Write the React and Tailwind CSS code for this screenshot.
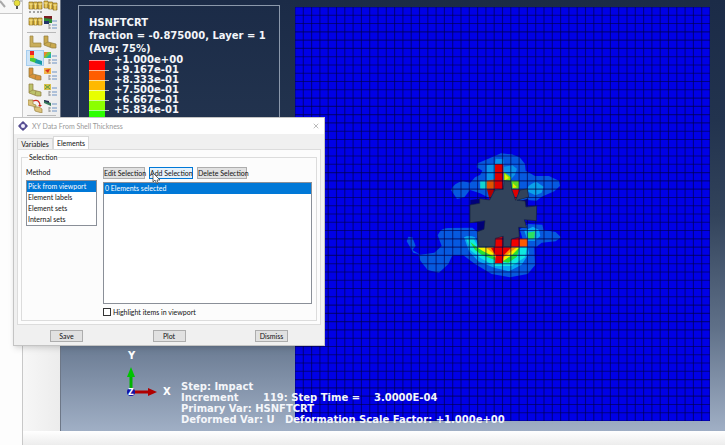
import React, { useState } from 'react';
import { X } from 'lucide-react';

const METHODS = ['Pick from viewport', 'Element labels', 'Element sets', 'Internal sets'];

const LEGEND = [
  ['+1.000e+00', 'bg-[#ff0000]'],
  ['+9.167e-01', 'bg-[#ff5d00]'],
  ['+8.333e-01', 'bg-[#ffb900]'],
  ['+7.500e-01', 'bg-[#e8ff00]'],
  ['+6.667e-01', 'bg-[#8bff00]'],
  ['+5.834e-01', 'bg-[#2eff00]'],
];

const CELLS = 50;
const lines = Array.from({ length: CELLS + 1 }, (_, i) => i);

// Bracket part, used by most of the plot-state buttons
const Bracket = ({ fill = '#c9a94e' }) => (
  <>
    <path d="M1 1h4v6l8 2v4l-4 0-8-3z" fill={fill} stroke="#8f7a3c" strokeWidth=".7" />
    <path d="M5 7l-4 2M8 8l-1 4" stroke="#8f7a3c" strokeWidth=".6" />
  </>
);

const Options = ({ children }) => (
  <>
    {children}
    <path d="M6 8v5M6 9h2M6 12h2" stroke="#777" strokeWidth=".7" fill="none" />
    <path d="M9 5h5M9 9h5M9 12h5" stroke="#6e93c4" strokeWidth="1" />
  </>
);

const Blocks = ({ skew, digits }) => (
  <>
    {[0, 1, 2].map((i) => (
      <g key={i} transform={`translate(${i * 4.5} ${skew ? i : 1})`}>
        <path d="M1 1h4v7h-4z" fill="#d9b23c" stroke="#8a6f1f" strokeWidth=".7" />
        <path d="M1 3h4M3 3v5" stroke="#fff2a8" strokeWidth=".7" />
      </g>
    ))}
    {digits && <path d="M2 11v2M6 11v2M10 11v2M13 11v2" stroke="#555" strokeWidth="1" />}
  </>
);

const TOOLS = [
  [
    { name: 'Frame sequence', icon: <Blocks digits /> },
    { name: 'Animate', icon: <Blocks skew /> },
    { name: 'Time history', icon: <Blocks /> },
    {
      name: 'Color code',
      icon: (
        <Options>
          <path d="M1 0h8v7h-8z" fill="#2a8a36" />
          <path d="M1 0h8v3l-8-1z" fill="#7c1d23" />
          <path d="M1 5h5v3h-5z" fill="#23346b" />
        </Options>
      ),
    },
  ],
  [
    { name: 'Undeformed shape', icon: <path d="M2 1h3v7h8v4h-11z" fill="#c9ae5c" stroke="#9b8441" strokeWidth=".7" /> },
    { name: 'Deformed shape', icon: <Bracket /> },
    {
      name: 'Contours',
      active: true,
      icon: (
        <>
          <path d="M2 0h4v4h-4z" fill="#e22" />
          <path d="M2 4h4v3h-4z" fill="#f4c020" />
          <path d="M2 7h4l3 1-1 4-6-2z" fill="#48c83a" />
          <path d="M8 8l6 2v4l-7-2z" fill="#159aa6" />
        </>
      ),
    },
    {
      name: 'Contour options',
      icon: (
        <Options>
          <path d="M1 1h7v6h-7z" fill="#72c53c" />
          <path d="M1 1h4l-4 5z" fill="#e8862c" />
          <path d="M8 2v5h-5z" fill="#24b0a8" />
        </Options>
      ),
    },
    { name: 'Symbols', icon: <Bracket fill="#d9913a" /> },
    {
      name: 'Symbol options',
      icon: (
        <Options>
          <path d="M1 1h7v6h-7z" fill="#efb64a" />
          <path d="M2 3l5-1-2 4z" fill="#d8331f" />
        </Options>
      ),
    },
    { name: 'Material orientation', icon: <Bracket fill="#bcc26a" /> },
    {
      name: 'Orientation options',
      icon: (
        <Options>
          <path d="M1 1h7v6h-7z" fill="#d8c04a" />
          <path d="M2 2l5 4M7 2l-5 4" stroke="#5b9a44" />
        </Options>
      ),
    },
    {
      name: 'Allow multiple states',
      icon: (
        <>
          <path d="M0 1h5v4l3 1v2l-8-2zM6 8h5l3 2v4l-7-2z" fill="#dcc27a" stroke="#9b8441" strokeWidth=".7" />
          <path d="M5 2c5-2 7 1 7 5" fill="none" stroke="#d0291e" strokeWidth="1.2" />
          <path d="M10 6h4l-2 2z" fill="#d0291e" />
        </>
      ),
    },
    {
      name: 'Superimpose options',
      icon: (
        <Options>
          <path d="M1 1l7 3v3l-7-3z" fill="#34785a" />
          <path d="M1 1l5 1v2l-5-2z" fill="#272d50" />
        </Options>
      ),
    },
  ],
];

const ToolGroup = ({ tools }) => (
  <div className="grid grid-cols-2 gap-x-0.5 gap-y-0.5">
    {tools.map((t) => (
      <button
        key={t.name}
        aria-label={t.name}
        className={`flex h-3.5 w-4 items-center justify-center ${t.active ? 'bg-[#cde4f7] outline outline-[#a5cdee]' : ''}`}
      >
        <svg viewBox="0 0 15 14" className="h-3.5 w-[15px]">{t.icon}</svg>
      </button>
    ))}
  </div>
);

const Mesh = () => (
  <svg viewBox="0 0 415 414" preserveAspectRatio="none" className="h-full w-full">
    <rect width="415" height="414" fill="#0000e6" />
    <g transform="translate(100 133) scale(.3333)">
      {/* low level bands */}
      <path d="M168 150Q178 128 204 124L226 128 240 112 256 104 262 92 245 82 248 70 280 56 318 40 350 43 374 52 390 72 392 92 420 108 462 108 492 122 495 138 478 154 440 170 425 182 395 180 360 190 290 178 255 160 225 150 208 172 186 177z" fill="#0659e0" />
      <path d="M128 286Q138 262 162 264L232 263 250 278 252 318 418 320 420 376 398 402 345 412 290 402 240 372 204 345 172 346 160 372 132 398 98 390 76 362 70 342 55 338 35 304 40 290 52 292 62 318 52 330 76 344 118 338 140 318z" fill="#0659e0" />
      <path d="M374 268L400 252 442 254 446 270 482 276 498 292 482 304 440 308 425 320 390 320z" fill="#0659e0" />
      {/* mid bands */}
      <path d="M275 76L300 72 302 56 325 58 326 80 352 76 366 86 360 104 346 120 372 122 374 150 278 150 256 146 254 124 275 120z" fill="#0a94ea" />
      <path d="M398 142Q410 128 425 126L446 140 440 158 422 166 400 156z" fill="#0aa2ea" />
      <path d="M207 292Q222 284 240 292L254 320 398 320 402 340 380 374 342 394 300 384 250 364 222 334z" fill="#09aaf2" />
      <path d="M388 272L414 260 432 270 436 288 420 302 398 302z" fill="#09aef2" />
      <path d="M214 296L236 296 250 322 396 322 390 352 350 378 300 378 256 354 226 330z" fill="#10e8e0" />
      <path d="M398 278L420 274 418 296 400 298z" fill="#2ce060" />
      <path d="M256 124h20v22h-20z" fill="#12d4d0" />
      {/* high bands */}
      <path d="M226 306L246 322 374 322 366 350 340 368 300 360 262 346 240 330z" fill="#24e038" />
      <path d="M246 322L374 322 352 344 326 362 300 352 262 332z" fill="#f4f000" />
      <path d="M272 322L366 322 326 352 300 344z" fill="#ff9400" />
      <path d="M300 292L326 288 326 322 350 322 326 346 324 370 300 370 302 346 288 324 300 322z" fill="#e80000" />
      <path d="M348 298L374 292 374 320 348 320z" fill="#f00000" />
      <path d="M374 296h24v24h-24z" fill="#ff5a00" />
      <path d="M327 96L348 112 348 122 327 122z" fill="#7ce010" />
      <path d="M348 122L372 122 372 146 352 146z" fill="#60dc20" />
      <path d="M330 102l12 12-12 6zM354 130l12 12-12 2z" fill="#ece800" />
      <path d="M275 122L300 118 300 146 275 148z" fill="#e05400" />
      <path d="M300 72h25v76h-25z" fill="#e00000" />
      <path d="M276 148L300 147 284 180z" fill="#b00000" />
      <path d="M350 148L374 148 362 181z" fill="#e00000" />
    </g>
    <g stroke="#000048" strokeOpacity=".62" strokeWidth="1.1">
      {lines.map((i) => (
        <React.Fragment key={i}>
          <path d={`M${i * 8.3} 0V414`} />
          <path d={`M0 ${i * 8.28}H415`} />
        </React.Fragment>
      ))}
    </g>
    <g transform="translate(100 133) scale(.3333)">
      <path d="M248 246L272 243 267 268 248 276zM226 180L254 176 254 190 226 195zM374 182L400 176 398 198 390 200z" fill="#000078" />
      <path
        d="M225 195L254 190 254 176 284 180 300 150 325 148 327 122 347 124 350 148 362 181 375 150 397 147 401 171 366 181 390 183 393 201 425 198 424 242 388 239 395 263 371 262 373 291 349 297 347 320 325 320 325 289 301 295 300 320 250 320 247 275 267 268 270 242 225 248z"
        fill="#32435b"
        stroke="#14213c"
        strokeWidth="2"
      />
    </g>
  </svg>
);

const Triad = () => (
  <svg viewBox="0 0 54 54" className="h-[54px] w-[54px]" fontFamily="'DejaVu Sans', sans-serif" fontWeight="bold" fill="#fff">
    <path d="M10 43V24" stroke="#00b400" strokeWidth="3" />
    <path d="M10 18l4 10h-8z" fill="#00c400" />
    <path d="M12 43h16" stroke="#b00000" strokeWidth="3" />
    <path d="M36 43l-9 4v-8z" fill="#b00000" />
    <circle cx="10" cy="43" r="4" fill="#1010a8" />
    <text x="7" y="10" fontSize="10">Y</text>
    <text x="42" y="46" fontSize="10">X</text>
    <text x="7" y="46" fontSize="8">Z</text>
  </svg>
);

const Legend = () => (
  <div className="absolute left-[17px] top-[5px] h-[180px] w-[202px] border border-[#8b98ab] px-2.5 pt-2.5 text-[10px] leading-[13px]">
    <p>HSNFTCRT</p>
    <p className="whitespace-nowrap">fraction = -0.875000, Layer = 1</p>
    <p>(Avg: 75%)</p>
    <ul className="leading-[10px]">
      {LEGEND.map(([value, color]) => (
        <li key={value} className="flex h-2.5">
          <span className={`mt-[5px] h-2.5 w-4 border-t border-white/60 ${color}`} />
          <span className="mt-[5px] w-1 border-t border-white/70" />
          <span className="pl-[5px]">{value}</span>
        </li>
      ))}
    </ul>
  </div>
);

const dialogButton = 'h-3 whitespace-nowrap border text-center leading-[9px]';

const ShellThicknessDialog = () => {
  const [tab, setTab] = useState('Elements');
  const [method, setMethod] = useState(METHODS[0]);
  const [highlight, setHighlight] = useState(false);

  return (
    <section
      role="dialog"
      aria-label="XY Data From Shell Thickness"
      className="absolute left-[13px] top-[117px] w-[312px] border border-[#c4c4c4] bg-[#f0f0f0] font-[Lato,sans-serif] text-[7px] leading-[10px] text-[#111] shadow-md"
    >
      <header className="flex h-4 items-center gap-1 bg-white pl-1 pr-1 text-[#999]">
        <svg viewBox="0 0 10 10" className="h-2.5 w-2.5">
          <path d="M5 0l2 2h-4zM5 10l2-2h-4zM0 5l2-2v4zM10 5l-2-2v4z" fill="#4b4386" />
          <circle cx="5" cy="5" r="2.8" fill="#f4f2ff" stroke="#5b5296" strokeWidth="1.6" />
        </svg>
        <h1 className="flex-1">XY Data From Shell Thickness</h1>
        <button aria-label="Close"><X className="h-2 w-2" strokeWidth={2} /></button>
      </header>

      <div className="px-[3px] pt-0.5">
        <div role="tablist" className="flex items-end">
          {['Variables', 'Elements'].map((t) => (
            <button
              key={t}
              role="tab"
              aria-selected={tab === t}
              onClick={() => setTab(t)}
              className={`w-9 border border-b-0 border-[#d9d9d9] ${tab === t ? 'h-[13px] bg-white' : 'h-[11px] bg-[#f0f0f0]'}`}
            >
              {t}
            </button>
          ))}
        </div>
        <div className="border border-[#dcdcdc] bg-[#fcfcfc] px-[3px] pb-[3px] pt-0.5">
          <fieldset className="border border-[#dcdcdc] px-1 pb-[3px]">
            <legend className="ml-0.5 px-px">Selection</legend>
            <div className="flex gap-1.5">
              <div className="w-[71px]">
                <p className="pb-[3px] pt-[5px]">Method</p>
                <ul role="listbox" aria-label="Method" className="border border-[#8a8f98] bg-white">
                  {METHODS.map((m) => (
                    <li
                      key={m}
                      role="option"
                      aria-selected={method === m}
                      onClick={() => setMethod(m)}
                      className={`h-[11px] whitespace-nowrap px-px ${method === m ? 'bg-[#0078d7] text-white' : ''}`}
                    >
                      {m}
                    </li>
                  ))}
                </ul>
              </div>
              <div className="flex-1 pt-[5px]">
                <div className="flex gap-1">
                  <button className={`${dialogButton} w-[42px] border-[#adadad] bg-[#e1e1e1]`}>Edit Selection</button>
                  <button className={`${dialogButton} w-11 border-[#0078d7] bg-[#e5f1fb]`}>Add Selection</button>
                  <button className={`${dialogButton} w-[50px] border-[#adadad] bg-[#e1e1e1]`}>Delete Selection</button>
                </div>
                <ul role="listbox" aria-label="Selected elements" className="mt-[3px] h-[122px] border border-[#8a8f98] bg-white">
                  <li role="option" aria-selected="true" className="h-[11px] bg-[#0078d7] px-px text-white">0 Elements selected</li>
                </ul>
                <label className="mt-[3px] flex items-center gap-0.5">
                  <input
                    type="checkbox"
                    checked={highlight}
                    onChange={(e) => setHighlight(e.target.checked)}
                    className="h-2 w-2 appearance-none border border-[#333] bg-white checked:bg-[#0078d7]"
                  />
                  Highlight items in viewport
                </label>
              </div>
            </div>
          </fieldset>
        </div>
      </div>

      <footer className="flex justify-between px-9 pb-[3px] pt-[5px]">
        {['Save', 'Plot', 'Dismiss'].map((b) => (
          <button key={b} className={`${dialogButton} w-[33px] border-[#adadad] bg-[#e1e1e1]`}>{b}</button>
        ))}
      </footer>
    </section>
  );
};

const App = () => (
  <div className="relative flex h-screen overflow-hidden bg-white">
    <aside className="w-[23px] shrink-0 border-r border-[#c8c8c8] bg-[#fdfdfd]">
      <div className="flex h-3.5 items-start gap-1 border-b border-[#c8c8c8] bg-[#f7f7f7]">
        <svg viewBox="0 0 8 9" className="h-[9px] w-2">
          <path d="M0 1l5 6" stroke="#a8a8a8" strokeWidth="2" />
        </svg>
        <svg viewBox="0 0 10 10" className="h-2.5 w-2.5">
          <circle cx="5" cy="3" r="3" fill="#e8df3c" stroke="#8c8840" strokeWidth=".6" />
          <path d="M4 6h2v3h-2z" fill="#555" />
          <path d="M1 0v2M9 0v2" stroke="#777" strokeWidth=".8" />
        </svg>
      </div>
    </aside>

    <div className="flex flex-1 flex-col">
      <div className="flex flex-1">
        <nav className="flex w-[37px] shrink-0 flex-col bg-gradient-to-r from-[#f7f7f7] to-[#ececec] px-1">
          <ToolGroup tools={TOOLS[0]} />
          <hr className="my-0.5 border-[#b8b8b8]" />
          <ToolGroup tools={TOOLS[1]} />
          <hr className="my-0.5 border-[#b8b8b8]" />
        </nav>

        <main className="relative flex-1 overflow-hidden border-l border-[#6d7787] bg-[linear-gradient(#1b2b47,#22334e_28%,#32435b_50%,#5f7088_76%,#a0afc5)] font-['DejaVu_Sans',sans-serif] font-bold text-[#f4f6fa]">
          <Legend />
          <div className="absolute bottom-2.5 left-[234px] right-[15px] top-[7px]">
            <Mesh />
          </div>
          <div className="absolute bottom-7 left-[60px]">
            <Triad />
          </div>
          <div className="absolute bottom-[6px] left-[120px] whitespace-pre text-[10px] leading-[11px]">
            <p>Step: Impact</p>
            <p>{'Increment       119: Step Time =    3.0000E-04'}</p>
            <p>Primary Var: HSNFTCRT</p>
            <p>{'Deformed Var: U   Deformation Scale Factor: +1.000e+00'}</p>
          </div>
        </main>
      </div>
      <footer className="h-3.5 bg-gradient-to-b from-white to-[#ededed]" />
    </div>

    <ShellThicknessDialog />

    <svg viewBox="0 0 8 12" className="absolute left-[152px] top-[173px] h-3 w-2">
      <path d="M1 0v9l2-2 2 4 1-1-1-3h3z" fill="#fff" stroke="#333" strokeWidth=".7" />
    </svg>
  </div>
);

export default App;
